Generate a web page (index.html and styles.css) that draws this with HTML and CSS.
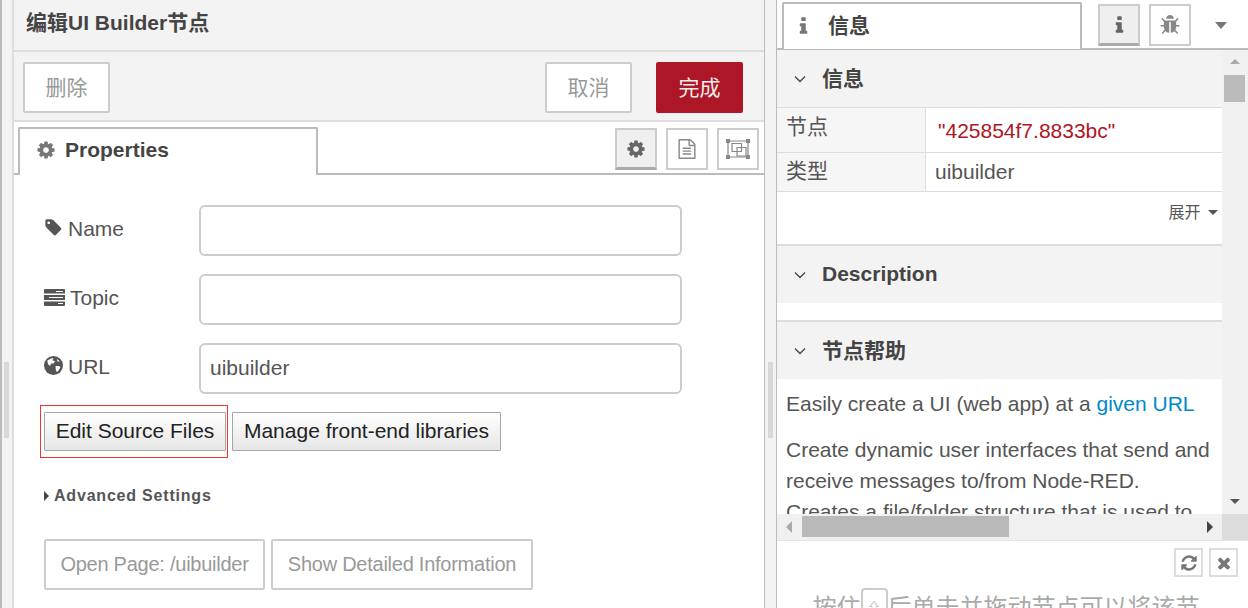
FILE: index.html
```html
<!DOCTYPE html>
<html lang="zh">
<head>
<meta charset="utf-8">
<title>编辑UI Builder节点</title>
<link rel="stylesheet" href="styles.css">
</head>
<body>
<svg class="defs" width="0" height="0">
  <symbol id="i-cog" viewBox="0 0 1792 1792"><path d="M1152 896q0-106-75-181t-181-75-181 75-75 181 75 181 181 75 181-75 75-181zm512-109v222q0 12-8 23t-20 13l-185 28q-19 54-39 91 35 50 107 138 10 12 10 25t-9 23q-27 37-99 108t-94 71q-12 0-26-9l-138-108q-44 23-91 38-16 136-29 186-7 28-36 28h-222q-14 0-24.5-8.5t-11.5-21.5l-28-184q-49-16-90-37l-141 107q-10 9-25 9-14 0-25-11-126-114-165-168-7-10-7-23 0-12 8-23 15-21 51-66.5t54-70.5q-27-50-41-99l-183-27q-13-2-21-12.5t-8-23.5v-222q0-12 8-23t19-13l186-28q14-46 39-92-40-57-107-138-10-12-10-24 0-10 9-23 26-36 98.5-107.5t94.5-71.5q13 0 26 10l138 107q44-23 91-38 16-136 29-186 7-28 36-28h222q14 0 24.5 8.5t11.5 21.5l28 184q49 16 90 37l142-107q9-9 24-9 13 0 25 10 129 119 165 170 7 8 7 22 0 12-8 23-15 21-51 66.5t-54 70.5q26 50 41 98l183 28q13 2 21 12.5t8 23.5z"/></symbol>
  <symbol id="i-info" viewBox="512 128 768 1408"><path d="M1216 1344v128q0 26-19 45t-45 19h-512q-26 0-45-19t-19-45v-128q0-26 19-45t45-19h64v-384h-64q-26 0-45-19t-19-45v-128q0-26 19-45t45-19h384q26 0 45 19t19 45v576h64q26 0 45 19t19 45zm-128-1152v192q0 26-19 45t-45 19h-256q-26 0-45-19t-19-45v-192q0-26 19-45t45-19h256q26 0 45 19t19 45z"/></symbol>
  <symbol id="i-file" viewBox="0 0 1792 1792"><path d="M1596 380q28 28 48 76t20 88v1152q0 40-28 68t-68 28h-1344q-40 0-68-28t-28-68v-1600q0-40 28-68t68-28h896q40 0 88 20t76 48zm-444-244v376h376q-10-29-22-41l-313-313q-12-12-41-22zm384 1528v-1024h-416q-40 0-68-28t-28-68v-416h-768v1536h1280zm-1024-864q0-14 9-23t23-9h704q14 0 23 9t9 23v64q0 14-9 23t-23 9h-704q-14 0-23-9t-9-23v-64zm736 224q14 0 23 9t9 23v64q0 14-9 23t-23 9h-704q-14 0-23-9t-9-23v-64q0-14 9-23t23-9h704zm0 256q14 0 23 9t9 23v64q0 14-9 23t-23 9h-704q-14 0-23-9t-9-23v-64q0-14 9-23t23-9h704z"/></symbol>
  <symbol id="i-bug" viewBox="64 64 1664 1664"><path d="M1696 960q0 26-19 45t-45 19h-224q0 171-67 290l208 209q19 19 19 45t-19 45q-18 19-45 19t-45-19l-198-197q-5 5-15 13t-42 28.5-65 36.5-82 29-97 13v-896h-128v896q-51 0-101.5-13.5t-87-33-66-39-43.5-32.5l-15-14-183 207q-20 21-48 21-24 0-43-16-19-18-20.5-44.5t15.5-46.5l202-227q-58-114-58-274h-224q-26 0-45-19t-19-45 19-45 45-19h224v-294l-173-173q-19-19-19-45t19-45 45-19 45 19l173 173h844l173-173q19-19 45-19t45 19 19 45-19 45l-173 173v294h224q26 0 45 19t19 45zm-480-576h-640q0-133 93.5-226.5t226.5-93.5 226.5 93.5 93.5 226.5z"/></symbol>
  <symbol id="i-chev" viewBox="0 0 12 8"><path d="M1 1.5 6 6.5 11 1.5" fill="none" stroke="currentColor" stroke-width="1.3"/></symbol>
</svg>

<div class="app">
  <div class="edge-left"><span class="grip"></span></div>

  <section class="editor">
    <h1 class="editor-title">编辑UI Builder节点</h1>
    <div class="editor-actions">
      <button class="btn btn-plain">删除</button>
      <span class="spacer"></span>
      <button class="btn btn-plain">取消</button>
      <button class="btn btn-primary">完成</button>
    </div>
    <div class="tabbar editor-tabs">
      <div class="tab">
        <svg class="tab-cog"><use href="#i-cog"/></svg>
        <span>Properties</span>
      </div>
      <span class="spacer"></span>
      <div class="icon-tabs">
        <span class="icon-tab is-active"><svg class="ico-20"><use href="#i-cog"/></svg></span>
        <span class="icon-tab"><svg class="ico-20"><use href="#i-file"/></svg></span>
        <span class="icon-tab">
          <svg class="ico-group" viewBox="0 0 24 20">
            <path d="M2 2h20v16H2z" fill="none" stroke="currentColor" stroke-width="1.2"/>
            <path d="M0 0h4v4H0zM20 0h4v4h-4zM0 16h4v4H0zM20 16h4v4h-4z"/>
            <path d="M6 4.500h9.500v8H6zM11 8.500h9v8.500h-9z" fill="none" stroke="currentColor" stroke-width="1.200"/>
          </svg>
        </span>
      </div>
    </div>

    <div class="form">
      <div class="form-row">
        <label class="form-label">
          <svg class="ico-label" viewBox="0 0 1792 1792"><path d="M576 448q0-53-37.500-90.500t-90.500-37.500-90.500 37.500-37.500 90.500 37.500 90.500 90.500 37.500 90.500-37.500 37.500-90.500zm1067 576q0 53-37 90l-491 492q-39 37-91 37-53 0-90-37l-715-716q-38-37-64.500-101t-26.500-117v-416q0-52 38-90t90-38h416q53 0 117 26.500t102 64.500l715 714q37 39 37 91z"/></svg>
          Name
        </label>
        <div class="input"></div>
      </div>
      <div class="form-row">
        <label class="form-label">
          <svg class="ico-tasks" viewBox="0 0 21 17"><path d="M0 1a1 1 0 0 1 1-1h19a1 1 0 0 1 1 1v3.500H0zM0 6h21v5H0zM0 12.500h21V16a1 1 0 0 1-1 1H1a1 1 0 0 1-1-1z"/><path d="M12 2h7v1h-7zM5 8h14v1H5zM14 14h5v1h-5z" fill="#fff"/></svg>
          Topic
        </label>
        <div class="input"></div>
      </div>
      <div class="form-row">
        <label class="form-label">
          <svg class="ico-label" viewBox="0 0 18 18"><circle cx="9" cy="9" r="9"/><path d="M3 4.500 6 2.500 9 2 8 4 10.500 5 9 7 6.500 7 6 9.500 4 8zM11 9.500h3.500L15.500 11 13 15 11.500 14.500 11 12zM12 2.500 15 5 13 5.500z" fill="#fff"/></svg>
          URL
        </label>
        <div class="input">uibuilder</div>
      </div>
    </div>

    <div class="source-row">
      <div class="highlight"><button class="btn-native">Edit Source Files</button></div>
      <button class="btn-native">Manage front-end libraries</button>
    </div>

    <div class="advanced"><span class="caret-right"></span>Advanced Settings</div>

    <div class="page-row">
      <button class="btn btn-plain btn-wide">Open Page: /uibuilder</button>
      <button class="btn btn-plain btn-wide">Show Detailed Information</button>
    </div>
  </section>

  <div class="edge-mid"><span class="grip"></span></div>

  <aside class="sidebar">
    <div class="tabbar side-tabs">
      <div class="tab side-tab">
        <svg class="tab-info"><use href="#i-info"/></svg>
        <span>信息</span>
      </div>
      <div class="side-icons">
        <span class="icon-tab is-active"><svg class="ico-info"><use href="#i-info"/></svg></span>
        <span class="icon-tab"><svg class="ico-bug"><use href="#i-bug"/></svg></span>
      </div>
      <span class="caret-down side-menu"></span>
    </div>

    <div class="side-scroll">
      <div class="side-body">
        <div class="side-main">
          <div class="sec-head sec-first"><svg class="chev"><use href="#i-chev"/></svg>信息</div>
          <div class="props">
            <div class="prop-key">节点</div>
            <div class="prop-val prop-id">"425854f7.8833bc"</div>
            <div class="prop-key prop-key-2">类型</div>
            <div class="prop-val prop-val-2">uibuilder</div>
          </div>
          <div class="more">展开 <span class="caret-down caret-small"></span></div>
          <div class="sec-head sec-rule"><svg class="chev"><use href="#i-chev"/></svg><span class="sec-latin">Description</span></div>
          <div class="blank"></div>
          <div class="sec-head sec-rule"><svg class="chev"><use href="#i-chev"/></svg>节点帮助</div>
          <div class="help">
            <p>Easily create a UI (web app) at a <a class="link">given URL</a></p>
            <p>Create dynamic user interfaces that send and receive messages to/from Node-RED. Creates a file/folder structure that is used to</p>
          </div>
        </div>
        <div class="vbar">
          <span class="arrow-up"></span>
          <span class="vthumb"></span>
          <span class="spacer"></span>
          <span class="arrow-down"></span>
        </div>
      </div>
      <div class="hbar">
        <div class="htrack">
          <span class="arrow-left"></span>
          <span class="hthumb"></span>
          <span class="spacer"></span>
          <span class="arrow-right"></span>
        </div>
        <div class="corner"></div>
      </div>
    </div>

    <div class="side-foot">
      <div class="foot-btns">
        <span class="foot-btn">
          <svg class="ico-foot" viewBox="0 0 1792 1792"><path d="M1639 1056q0 5-1 7-64 268-268 434.500t-478 166.500q-146 0-282.500-55t-243.500-157l-129 129q-19 19-45 19t-45-19-19-45v-448q0-26 19-45t45-19h448q26 0 45 19t19 45-19 45l-137 137q71 66 161 102t187 36q134 0 250-65t186-179q11-17 53-117 8-23 30-23h192q13 0 22.500 9.500t9.500 22.500zm25-800v448q0 26-19 45t-45 19h-448q-26 0-45-19t-19-45 19-45l138-138q-148-137-349-137-134 0-250 65t-186 179q-11 17-53 117-8 23-30 23h-199q-13 0-22.500-9.500t-9.500-22.500v-7q65-268 270-434.500t480-166.500q146 0 284 55.500t245 156.500l130-129q19-19 45-19t45 19 19 45z"/></svg>
        </span>
        <span class="foot-btn">
          <svg class="ico-foot" viewBox="0 0 1792 1792"><path d="M1490 1322q0 40-28 68l-136 136q-28 28-68 28t-68-28l-294-294-294 294q-28 28-68 28t-68-28l-136-136q-28-28-28-68t28-68l294-294-294-294q-28-28-28-68t28-68l136-136q28-28 68-28t68 28l294 294 294-294q28-28 68-28t68 28l136 136q28 28 28 68t-28 68l-294 294 294 294q28 28 28 68z"/></svg>
        </span>
      </div>
      <div class="hint">按住<span class="key">⇧</span>后单击并拖动节点可以将该节</div>
    </div>
  </aside>
</div>
</body>
</html>
```

FILE: styles.css
```css
* { box-sizing: border-box; }

html, body {
  margin: 0;
  height: 608px;
  overflow: hidden;
  background: #fff;
}

body {
  font-family: "Liberation Sans", "Noto Sans CJK SC", sans-serif;
  font-size: 21px;
  color: #555;
}

.defs { position: absolute; }

button { font-family: inherit; font-size: 21px; margin: 0; }

.spacer { flex: 1 1 auto; }

svg { fill: currentColor; display: block; }

.app { display: flex; height: 608px; }

/* gutters */
.edge-left {
  width: 14px;
  flex: none;
  background: #f3f3f3;
  border-left: 2px solid #bbb;
  border-right: 2px solid #ddd;
  display: flex;
  align-items: center;
  padding: 0 0 0 2px;
}
.edge-mid {
  width: 12px;
  flex: none;
  background: #f3f3f3;
  border-left: 1px solid #bbb;
  display: flex;
  align-items: center;
  padding-left: 3px;
}
.grip {
  width: 5px;
  height: 76px;
  margin-top: 192px;
  background: #d8d8d8;
}

/* editor */
.editor { width: 750px; flex: none; height: 608px; overflow: hidden; }

.editor-title {
  margin: 0;
  height: 52px;
  padding: 8px 0 0 12px;
  background: #f3f3f3;
  border-bottom: 2px solid #ddd;
  font-size: 21px;
  line-height: 29px;
  font-weight: bold;
  color: #444;
}

.editor-actions {
  height: 70px;
  padding: 10px 21px 0 9px;
  display: flex;
  align-items: flex-start;
  background: #f3f3f3;
  border-bottom: 2px solid #ddd;
}

.btn {
  height: 51px;
  padding: 0 20px 4px;
  background: #fff;
  border: 2px solid #ccc;
  border-radius: 2px;
  color: #999;
}
.btn-plain { min-width: 87px; }
.btn-primary {
  width: 87px;
  margin-left: 24px;
  background: #ad1625;
  border-color: #ad1625;
  color: #eee;
}

.tabbar { display: flex; border-bottom: 2px solid #bbb; }

.editor-tabs {
  height: 53px;
  padding: 5px 5px 0 4px;
}

.tab {
  width: 300px;
  height: 48px;
  padding: 6px 0 0 16px;
  display: flex;
  align-items: flex-start;
  background: #fff;
  border: 2px solid #bbb;
  border-bottom: 0;
  border-radius: 2px 2px 0 0;
  font-size: 21px;
  line-height: 29px;
  font-weight: bold;
  color: #444;
}
.tab-cog { width: 20px; height: 20px; margin: 5px 9px 0 0; color: #777; }

.icon-tabs { display: flex; gap: 9px; padding-top: 1px; }

.icon-tab {
  width: 42px;
  height: 42px;
  display: flex;
  align-items: center;
  justify-content: center;
  background: #fff;
  border: 2px solid #ccc;
  color: #888;
}
.icon-tab.is-active {
  background: #efefef;
  border-bottom: 3px solid #aaa;
  color: #666;
}
.ico-20 { width: 20px; height: 20px; }
.ico-group { width: 24px; height: 20px; }

/* form */
.form {
  padding: 30px 82px 0 30px;
  display: flex;
  flex-direction: column;
  gap: 18px;
}
.form-row { display: flex; align-items: flex-start; }
.form-label {
  width: 155px;
  flex: none;
  padding-top: 10px;
  line-height: 28px;
  display: flex;
  align-items: center;
  gap: 5px;
  color: #555;
}
.ico-label { width: 19px; height: 19px; margin-top: -3px; }
.ico-tasks { width: 21px; height: 17px; margin-top: -2px; }

.input {
  width: 483px;
  height: 51px;
  padding: 0 9px;
  border: 2px solid #ccc;
  border-radius: 6px;
  line-height: 45px;
  color: #555;
}

.source-row {
  margin-top: 11px;
  padding-left: 26px;
  display: flex;
  align-items: flex-start;
  gap: 4px;
}
.highlight {
  width: 188px;
  height: 53px;
  padding: 6px 1px 0 3px;
  border: 1px solid #e33;
}
.btn-native {
  height: 39px;
  padding: 0 0 2px;
  background: linear-gradient(#fff, #e6e6e6);
  border: 1px solid #a6a6a6;
  border-radius: 1px;
  color: #222;
  white-space: nowrap;
}
.highlight .btn-native { width: 182px; }
.source-row > .btn-native { margin-top: 7px; width: 269px; }

.advanced {
  margin-top: 27px;
  padding-left: 30px;
  display: flex;
  align-items: center;
  font-size: 16px;
  line-height: 22px;
  font-weight: bold;
  letter-spacing: 0.8px;
  color: #555;
}
.caret-right {
  width: 0;
  height: 0;
  margin-right: 5px;
  border-left: 5px solid #444;
  border-top: 5px solid transparent;
  border-bottom: 5px solid transparent;
}

.page-row {
  margin-top: 32px;
  padding-left: 30px;
  display: flex;
  gap: 6px;
}
.page-row .btn { font-size: 20px; letter-spacing: -0.25px; padding: 0; }
.page-row .btn:first-child { width: 221px; }
.page-row .btn:last-child { width: 262px; }

/* sidebar */
.sidebar {
  flex: 1 1 auto;
  min-width: 0;
  height: 608px;
  overflow: hidden;
  border-left: 1px solid #bbb;
  display: flex;
  flex-direction: column;
}
.side-tabs {
  height: 50px;
  flex: none;
  padding: 2px 0 0 5px;
  align-items: flex-start;
}
.side-tab {
  height: 47px;
  padding: 7px 0 0 15px;
  font-weight: bold;
  color: #444;
}
.tab-info { width: 9px; height: 17px; margin: 6px 20px 0 0; color: #777; }
.side-icons { display: flex; gap: 9px; margin: 2px 0 0 16px; }
.ico-info { width: 9px; height: 17px; }
.ico-bug { width: 20px; height: 20px; }
.caret-down {
  width: 0;
  height: 0;
  border-top: 7px solid #777;
  border-left: 6px solid transparent;
  border-right: 6px solid transparent;
}
.side-menu { margin: 20px 0 0 24px; }
.caret-small {
  display: inline-block;
  margin-left: 3px;
  vertical-align: 3px;
  border-top-width: 5px;
  border-left-width: 5px;
  border-right-width: 5px;
  border-top-color: #555;
}

.side-scroll { flex: none; height: 490px; display: flex; flex-direction: column; }
.side-body { display: flex; height: 464px; flex: none; }
.side-main { width: 445px; flex: none; height: 464px; overflow: hidden; }

.sec-head {
  display: flex;
  align-items: center;
  height: 57px;
  padding: 0 0 0 17px;
  background: #f3f3f3;
  font-weight: bold;
  color: #444;
  line-height: 28px;
}
.sec-rule { height: 59px; border-top: 2px solid #ddd; }
.sec-latin { padding-bottom: 2px; }
.chev { width: 12px; height: 8px; margin-right: 16px; color: #444; }

.props {
  display: grid;
  grid-template-columns: 149px 1fr;
  grid-template-rows: 45px 39px;
  border-top: 1px solid #ddd;
}
.prop-key {
  padding: 4px 0 0 9px;
  line-height: 30px;
  background: #f6f6f6;
  border-right: 1px solid #ddd;
  border-bottom: 1px solid #ddd;
}
.prop-key-2 { padding-top: 3px; }
.prop-val {
  padding: 8px 0 0 9px;
  line-height: 29px;
  border-bottom: 1px solid #ddd;
}
.prop-id { padding-left: 12px; color: #ad1625; }
.prop-val-2 { padding-top: 4px; }

.more {
  height: 52px;
  padding: 9px 4px 0 0;
  text-align: right;
  font-size: 16px;
  line-height: 24px;
  color: #555;
}

.blank { height: 17px; }

.help { padding: 9px 9px 0; line-height: 31px; }
.help p { margin: 0 0 15px; }
.link { color: #0088cc; }

.vbar {
  width: 26px;
  flex: none;
  padding: 0 3px 0 2px;
  background: #f1f1f1;
  display: flex;
  flex-direction: column;
  align-items: center;
}
.arrow-up {
  margin-top: 9px;
  border-bottom: 5px solid #aaa;
  border-left: 5px solid transparent;
  border-right: 5px solid transparent;
}
.vthumb { width: 21px; height: 27px; margin-top: 11px; background: #bbb; }
.arrow-down {
  margin-bottom: 10px;
  border-top: 5px solid #555;
  border-left: 5px solid transparent;
  border-right: 5px solid transparent;
}

.hbar { display: flex; height: 26px; flex: none; }
.htrack {
  width: 445px;
  flex: none;
  padding: 2px 9px 3px 9px;
  display: flex;
  align-items: center;
  background: #f0f0f0;
}
.arrow-left {
  border-right: 6px solid #aaa;
  border-top: 6px solid transparent;
  border-bottom: 6px solid transparent;
}
.hthumb { width: 207px; height: 21px; margin-left: 10px; background: #b9b9b9; }
.arrow-right {
  border-left: 6px solid #444;
  border-top: 6px solid transparent;
  border-bottom: 6px solid transparent;
}
.corner { flex: 1 1 auto; background: #dcdcdc; }

.side-foot {
  flex: 1 1 auto;
  min-height: 0;
  border-top: 1px solid #e6e6e6;
  background: #fff;
}
.foot-btns {
  display: flex;
  justify-content: flex-end;
  gap: 6px;
  padding: 7px 10px 0 0;
}
.foot-btn {
  width: 29px;
  height: 29px;
  display: flex;
  align-items: center;
  justify-content: center;
  border: 2px solid #ddd;
  color: #777;
}
.ico-foot { width: 18px; height: 18px; }

.hint {
  margin-top: 11px;
  display: flex;
  justify-content: center;
  align-items: flex-start;
  padding-right: 13px;
  font-size: 24px;
  line-height: 40px;
  color: #aaa;
  white-space: nowrap;
}
.key {
  width: 27px;
  height: 32px;
  flex: none;
  display: flex;
  justify-content: center;
  align-items: center;
  border: 2px solid #ccc;
  border-radius: 4px;
  font-size: 14px;
  padding-top: 8px;
}
```
